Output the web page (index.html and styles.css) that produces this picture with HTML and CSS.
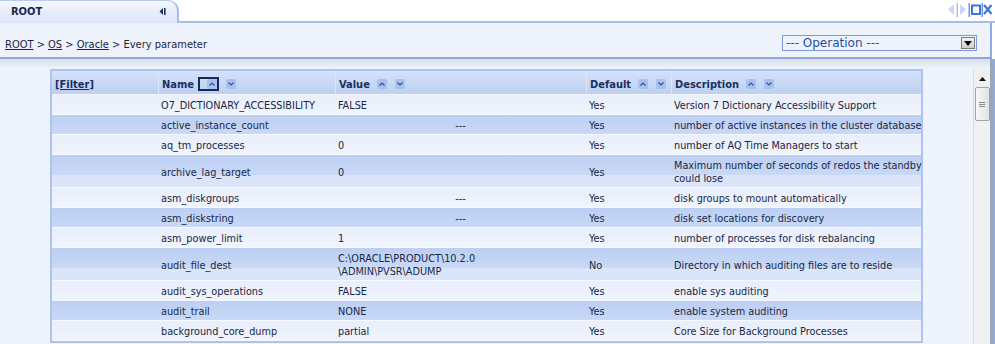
FILE: index.html
```html
<!DOCTYPE html>
<html lang="en">
<head>
  <meta charset="UTF-8">
  <title>Every parameter</title>
  <link rel="stylesheet" href="styles.css">
</head>
<body>

  <div class="tabbar">
    <div class="tab">
      <span class="tab-title">ROOT</span>
      <svg class="tab-collapse" width="7" height="7" viewBox="0 0 7 7">
        <path d="M4 0 L0.5 3.5 L4 7 Z" fill="#1d3566"/>
        <rect x="5" y="0" width="1.6" height="7" fill="#1d3566"/>
      </svg>
    </div>
    <div class="tabline">
      <!-- prev / next / maximize / close -->
      <svg class="win-ctrl" width="50" height="20" viewBox="0 0 50 20">
        <path d="M3 9.5 L9 4 L9 15 Z" fill="#c9d7f4"/>
        <rect x="11.5" y="3" width="1.5" height="14" fill="#a9bfee"/>
        <path d="M15 4 L21 9.5 L15 15 Z" fill="#c9d7f4"/>
        <rect x="23.5" y="3" width="1.5" height="14" fill="#6f97e2"/>
        <rect x="27" y="5.5" width="8" height="8.5" fill="none" stroke="#3f75d8" stroke-width="2"/>
        <rect x="36.5" y="3" width="1.5" height="14" fill="#6f97e2"/>
        <path d="M39 5 L46.5 14 M46.5 5 L39 14" stroke="#3f75d8" stroke-width="2.2"/>
      </svg>
    </div>
  </div>

  <div class="crumbs">
    <div class="path">
      <a href="#">ROOT</a> &gt; <a href="#">OS</a> &gt; <a href="#">Oracle</a> &gt; Every parameter
    </div>
    <div class="op-select">
      <span>--- Operation ---</span>
      <span class="op-btn">
        <svg width="8" height="5" viewBox="0 0 8 5"><path d="M0 0 H8 L4 5 Z" fill="#000"/></svg>
      </span>
    </div>
  </div>

  <div class="content">
    <div class="grid-wrap">
      <table class="grid">
        <colgroup>
          <col style="width:106px">
          <col style="width:177px">
          <col style="width:251px">
          <col style="width:85px">
          <col style="width:250px">
        </colgroup>
        <thead>
          <tr>
            <th><a href="#" class="filter">[Filter]</a></th>
            <th>
              <div class="hcell">Name
                <span class="sort-on"><span class="sort up"></span></span>
                <span class="sort down"></span>
              </div>
            </th>
            <th>
              <div class="hcell">Value <span class="sort up"></span><span class="sort down"></span></div>
            </th>
            <th>
              <div class="hcell">Default <span class="sort up"></span><span class="sort down"></span></div>
            </th>
            <th>
              <div class="hcell">Description <span class="sort up"></span><span class="sort down"></span></div>
            </th>
          </tr>
        </thead>
        <tbody>
          <tr>
            <td></td><td>O7_DICTIONARY_ACCESSIBILITY</td><td>FALSE</td><td>Yes</td>
            <td>Version 7 Dictionary Accessibility Support</td>
          </tr>
          <tr class="alt">
            <td></td><td>active_instance_count</td><td class="none">---</td><td>Yes</td>
            <td>number of active instances in the cluster database</td>
          </tr>
          <tr>
            <td></td><td>aq_tm_processes</td><td>0</td><td>Yes</td>
            <td>number of AQ Time Managers to start</td>
          </tr>
          <tr class="alt">
            <td></td><td>archive_lag_target</td><td>0</td><td>Yes</td>
            <td>Maximum number of seconds of redos the standby<br>could lose</td>
          </tr>
          <tr>
            <td></td><td>asm_diskgroups</td><td class="none">---</td><td>Yes</td>
            <td>disk groups to mount automatically</td>
          </tr>
          <tr class="alt">
            <td></td><td>asm_diskstring</td><td class="none">---</td><td>Yes</td>
            <td>disk set locations for discovery</td>
          </tr>
          <tr>
            <td></td><td>asm_power_limit</td><td>1</td><td>Yes</td>
            <td>number of processes for disk rebalancing</td>
          </tr>
          <tr class="alt">
            <td></td><td>audit_file_dest</td><td>C:\ORACLE\PRODUCT\10.2.0<br>\ADMIN\PVSR\ADUMP</td><td>No</td>
            <td>Directory in which auditing files are to reside</td>
          </tr>
          <tr>
            <td></td><td>audit_sys_operations</td><td>FALSE</td><td>Yes</td>
            <td>enable sys auditing</td>
          </tr>
          <tr class="alt">
            <td></td><td>audit_trail</td><td>NONE</td><td>Yes</td>
            <td>enable system auditing</td>
          </tr>
          <tr>
            <td></td><td>background_core_dump</td><td>partial</td><td>Yes</td>
            <td>Core Size for Background Processes</td>
          </tr>
        </tbody>
      </table>
    </div>

    <div class="vscroll">
      <svg class="vscroll-up" width="7" height="4" viewBox="0 0 7 4"><path d="M0 4 L3.5 0 L7 4 Z" fill="#111"/></svg>
      <div class="thumb">
        <span></span><span></span><span></span>
      </div>
    </div>
    <div class="edge"></div>
  </div>

</body>
</html>
```

FILE: styles.css
```css
html, body {
  margin: 0;
  height: 344px;
  overflow: hidden;
}

body {
  background: #ffffff;
  font-family: "DejaVu Sans Condensed", "DejaVu Sans", sans-serif;
  font-size: 11px;
  color: #1a2745;
}

/* ---------- tab strip ---------- */

.tabbar {
  display: flex;
  height: 23px;
}

.tab {
  width: 179px;
  height: 23px;
  box-sizing: border-box;
  border-top: 1px solid #b9cbf1;
  border-right: 2px solid #a4bcee;
  border-top-right-radius: 11px;
  background: linear-gradient(#f4f7fd, #dbe5f7);
  display: flex;
  align-items: center;
  justify-content: space-between;
  padding: 0 11px 1px 11px;
}

.tab-title {
  font-weight: bold;
  color: #15284f;
}

.tab-collapse {
  display: block;
}

.tabline {
  flex: 1;
  border-bottom: 2px solid #a4bcee;
  display: flex;
  justify-content: flex-end;
  align-items: flex-start;
}

.win-ctrl {
  display: block;
}

/* ---------- breadcrumb bar ---------- */

.crumbs {
  height: 34px;
  margin-right: 3px;
  border-right: 2px solid #8eabe9;
  border-bottom: 2px solid #8ea6d9;
  background: #eef2fb;
  display: flex;
  align-items: flex-start;
  justify-content: space-between;
  padding: 0 13px 0 5px;
}

.path {
  font-size: 11px;
  color: #1a2745;
  margin-top: 15px;
}

.path a {
  color: #1a2745;
  text-decoration: underline;
}

.op-select {
  width: 195px;
  height: 16px;
  box-sizing: border-box;
  border: 1px solid #7f9bd6;
  background: #eef2fb;
  display: flex;
  align-items: center;
  justify-content: space-between;
  padding-left: 3px;
  margin-top: 12px;
  font-family: "DejaVu Sans", Verdana, sans-serif;
  font-size: 12px;
  color: #1f4f9f;
}

.op-btn {
  width: 14px;
  height: 12px;
  box-sizing: border-box;
  border: 1px solid #7d7d7d;
  background: linear-gradient(#f2f2f2, #cfcfcf);
  display: flex;
  align-items: center;
  justify-content: center;
  margin-right: 1px;
}

.op-btn svg {
  display: block;
}

/* ---------- content ---------- */

.content {
  display: flex;
  height: 285px;
  border-right: 2px solid #8eabe9;
  background: linear-gradient(#d9dfeb 0, #eef3fc 10px);
}

.grid-wrap {
  flex: 1;
  padding: 10px 0 0 50px;
}

.grid {
  width: 873px;
  table-layout: fixed;
  border-collapse: separate;
  border-spacing: 0;
  border: 2px solid #adc3ef;
  line-height: 13px;
}

.grid th {
  height: 24px;
  padding: 3px 0 0 3px;
  box-sizing: border-box;
  text-align: left;
  font-weight: bold;
  font-size: 11px;
  color: #1b2f5e;
  background: linear-gradient(#d4e1f8, #bdd0f3);
  border-bottom: 1px solid #f4f7fe;
  border-left: 1px solid #dbe6f9;
}

.grid th:first-child {
  border-left: none;
}

.filter {
  color: #1b2f5e;
  text-decoration: underline;
}

.hcell {
  display: flex;
  align-items: center;
}

.sort {
  width: 10px;
  height: 10px;
  border-radius: 2px;
  background-color: #a9c0ea;
  margin-left: 8px;
  background-repeat: no-repeat;
  background-position: center;
}

.hcell .sort:first-of-type {
  margin-left: 7px;
}

.sort.up {
  background-image: url("data:image/svg+xml,%3Csvg xmlns='http://www.w3.org/2000/svg' width='6' height='4' viewBox='0 0 6 4'%3E%3Cpath d='M0.5 3.5 L3 1 L5.5 3.5' fill='none' stroke='%23304f8c' stroke-width='1.2'/%3E%3C/svg%3E");
}

.sort.down {
  background-image: url("data:image/svg+xml,%3Csvg xmlns='http://www.w3.org/2000/svg' width='6' height='4' viewBox='0 0 6 4'%3E%3Cpath d='M0.5 0.5 L3 3 L5.5 0.5' fill='none' stroke='%23304f8c' stroke-width='1.2'/%3E%3C/svg%3E");
}

.sort-on {
  display: flex;
  border: 2px solid #102a5c;
  margin-left: 4px;
  margin-right: -1px;
}

.sort-on .sort {
  margin: 0;
}

.grid td {
  padding: 4px 3px 2px;
  font-size: 10.8px;
  vertical-align: middle;
  border-bottom: 1px solid #f6f9fe;
  background: #f0f4fc linear-gradient(#e8eefb, #f0f4fc) no-repeat top / 100% 20px;
  white-space: nowrap;
}

.grid tr.alt td {
  background: #dbe5f9 linear-gradient(#bccff3, #c9d9f6) no-repeat top / 100% 20px;
}

.grid td.none {
  text-align: center;
}

/* ---------- fake scrollbar ---------- */

.vscroll {
  width: 16px;
  margin-top: 9px;
  border-left: 1px solid #dedede;
  background: #f0f0f0;
  display: flex;
  flex-direction: column;
  align-items: center;
}

.vscroll-up {
  display: block;
  margin-top: 9px;
}

.thumb {
  width: 15px;
  height: 34px;
  box-sizing: border-box;
  margin-top: 6px;
  border: 1px solid #a3a3a3;
  border-radius: 2px;
  background: linear-gradient(to right, #f7f7f7, #e2e2e2);
  display: flex;
  flex-direction: column;
  align-items: center;
  justify-content: center;
  gap: 1px;
}

.thumb span {
  width: 6px;
  height: 1px;
  background: #8a8a8a;
}

.edge {
  width: 3px;
  background: #99a7b7;
}
```
